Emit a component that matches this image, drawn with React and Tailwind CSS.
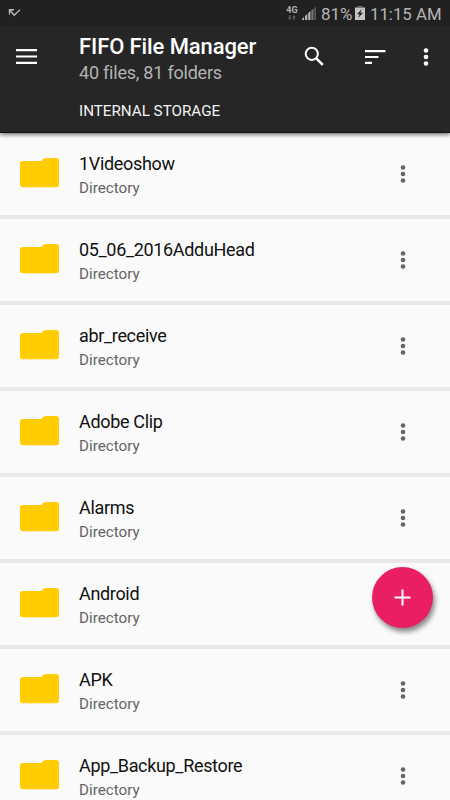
const folders = [
  '1Videoshow',
  '05_06_2016AdduHead',
  'abr_receive',
  'Adobe Clip',
  'Alarms',
  'Android',
  'APK',
  'App_Backup_Restore',
];

function MoreDots({ className }) {
  return (
    <svg width="8" height="20" viewBox="0 0 8 20" fill="currentColor" className={className}>
      <circle cx="4" cy="3.5" r="2.3" />
      <circle cx="4" cy="10" r="2.3" />
      <circle cx="4" cy="16.5" r="2.3" />
    </svg>
  );
}

function StatusBar() {
  return (
    <div className="flex h-[26px] shrink-0 items-center bg-[#212121] text-[#b5b5b5]">
      <svg width="14" height="10" viewBox="0 0 14 10" fill="none" stroke="currentColor" strokeWidth="1.4" className="mb-px ml-[8px]">
        <path d="M1.5 6.5V1.7H6M1.5 1.7L6.2 7.3L12 1.7" />
      </svg>
      <div className="ml-[264px] flex w-[12px] flex-col items-center">
        <span className="text-[9px] leading-[8px] font-bold whitespace-nowrap">4G</span>
        <svg width="8" height="5" viewBox="0 0 8 5" fill="#666" className="mt-[1px]">
          <path d="M1.3 0h1v2.5H3.5L1.8 5L0 2.5h1.3zM5.5 5h1V2.5h1.3L6 0L4.3 2.5h1.2z" />
        </svg>
      </div>
      <svg width="15" height="14" viewBox="0 0 15 14" className="ml-[4px]">
        <path d="M0 14V13L2 11V14z" fill="#b5b5b5" />
        <path d="M3 14V10L5.3 8V14z" fill="#b5b5b5" />
        <path d="M6.2 14V7L8.4 5V14z" fill="#b5b5b5" />
        <path d="M9.3 14V4.5L11.5 2.5V14z" fill="#777" />
        <path d="M12.2 14V2L14 0V14z" fill="#555" />
      </svg>
      <span className="mt-px ml-[4px] w-[32px] text-[17px] leading-[26px] whitespace-nowrap">81%</span>
      <svg width="10" height="14" viewBox="0 0 10 14" className="ml-[2px]">
        <path d="M2.5 0H7.5V1H2.5z" fill="#777" />
        <path d="M0 1.5H10V14H0z" fill="#c4c4c4" />
        <path d="M6.8 3L2 8.2H4.6L3.2 12L8 6.7H5.4z" fill="#212121" />
      </svg>
      <span className="mt-px ml-[5px] text-[16.8px] leading-[26px] whitespace-nowrap">11:15 AM</span>
    </div>
  );
}

function Header() {
  return (
    <header className="relative z-10 flex h-[133px] shrink-0 flex-col border-b border-[#101010] bg-[#262626] shadow-[0_2px_4px_rgba(0,0,0,0.5)]">
      <StatusBar />
      <div className="flex h-[62px] items-start text-white">
        <svg width="21" height="15" viewBox="0 0 21 15" fill="currentColor" className="mt-[23px] ml-[16px]">
          <path d="M0 0h21v2.2H0zM0 6.4h21v2.2H0zM0 12.8h21V15H0z" />
        </svg>
        <div className="ml-[42px] w-[224px] pt-[7px] whitespace-nowrap">
          <h1 className="text-[22px] leading-[27px] font-medium tracking-[-0.1px]">FIFO File Manager</h1>
          <p className="text-[18px] leading-[26px] tracking-[-0.22px] text-[#b3b3b3]">40 files, 81 folders</p>
        </div>
        <svg width="21" height="21" viewBox="0 0 21 21" fill="none" stroke="currentColor" strokeWidth="2" className="mt-[20px] ml-px">
          <circle cx="7.8" cy="7.8" r="6.1" />
          <path d="M12.3 12.3L18.8 18.8" strokeWidth="2.6" />
        </svg>
        <svg width="21" height="14" viewBox="0 0 21 14" fill="currentColor" className="mt-[24px] ml-[40px]">
          <path d="M0 0h20.5v2.3H0zM0 5.9h13.5v2.2H0zM0 11.7h7V14H0z" />
        </svg>
        <MoreDots className="mt-[21px] ml-[36px]" />
      </div>
      <div className="ml-[79px] pt-[13px] text-[15.2px] leading-[20px] text-[#f2f2f2]">INTERNAL STORAGE</div>
    </header>
  );
}

function FolderRow({ name }) {
  return (
    <li className="flex h-[86px] shrink-0 items-start border-b-4 border-[#e8e8e8]">
      <svg width="39" height="30" viewBox="0 0 39 30" fill="#ffcc00" className="mt-[25px] ml-[20px]">
        <path d="M3 3H21L23.8 .8Q24.8 0 26 0H36Q39 0 39 3V26.3Q39 29.3 36 29.3H3Q0 29.3 0 26.3V6Q0 3 3 3z" />
      </svg>
      <div className="ml-[20px] w-[320px] pt-[19px] whitespace-nowrap">
        <div className="text-[18px] leading-[24px] tracking-[-0.33px] text-[#111]">{name}</div>
        <div className="text-[15.2px] leading-[24px] text-[#646464]">Directory</div>
      </div>
      <MoreDots className="mt-[31px] text-[#666]" />
    </li>
  );
}

export default function App() {
  return (
    <div className="relative flex h-[800px] w-[450px] flex-col overflow-hidden bg-[#fafafa] font-[Roboto,sans-serif]">
      <Header />
      <ul className="flex min-h-0 flex-1 flex-col overflow-hidden">
        {folders.map((name) => (
          <FolderRow key={name} name={name} />
        ))}
      </ul>
      <button className="absolute top-[567px] left-[372px] z-20 flex size-[61px] items-center justify-center rounded-full bg-[#e91e63] text-white shadow-[2px_4px_5px_rgba(0,0,0,0.45)]">
        <svg width="17" height="17" viewBox="0 0 17 17" fill="currentColor">
          <path d="M7.5 .5h2v7h7v2h-7v7h-2v-7h-7v-2h7z" />
        </svg>
      </button>
    </div>
  );
}
